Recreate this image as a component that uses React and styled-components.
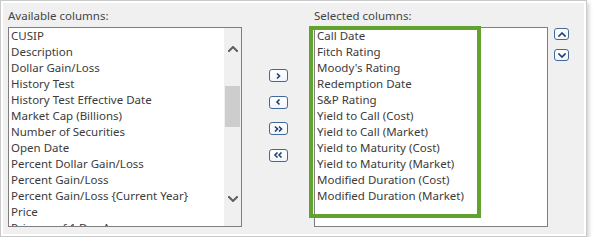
import React from "react";
import styled, { createGlobalStyle } from "styled-components";

const Global = createGlobalStyle`
  html, body { margin: 0; padding: 0; background: #ffffff; }
  body { font-family: "Noto Sans", "Open Sans", sans-serif; }
  * { box-sizing: border-box; }
`;

const Frame = styled.div`
  width: 587px;
  height: 237px;
  border: 1px solid #c9c9c9;
  background: #ffffff;
  padding: 2px;
  box-shadow: 2px 3px 4px rgba(0, 0, 0, 0.18);
`;

const Panel = styled.div`
  height: 100%;
  background: #f0f0f0;
  display: flex;
  align-items: flex-start;
  padding: 5px 0 0 5px;
`;

const Column = styled.div`
  display: flex;
  flex-direction: column;
  width: 234px;
`;

const Label = styled.div`
  font-size: 11.5px;
  line-height: 16px;
  color: #444444;
  height: 16px;
  margin-bottom: 3px;
  padding-left: ${(p) => p.$indent || 0}px;
`;

const ListBox = styled.div`
  position: relative;
  width: 234px;
  height: 200px;
  border: 1px solid #7f7f7f;
  background: #ffffff;
  display: flex;
  overflow: hidden;
`;

const Items = styled.ul`
  list-style: none;
  margin: 0;
  padding: 0 0 0 ${(p) => p.$pad}px;
  flex: 1;
  overflow: hidden;
`;

const Item = styled.li`
  font-size: 11.5px;
  line-height: 16px;
  height: 16px;
  color: #3b3b3b;
  white-space: nowrap;
`;

const Scrollbar = styled.div`
  width: 17px;
  background: #f0f0f0;
  display: flex;
  flex-direction: column;
  align-items: center;
`;

const ArrowSlot = styled.div`
  height: ${(p) => p.$h}px;
  display: flex;
  align-items: ${(p) => (p.$end ? "flex-end" : "flex-start")};
  justify-content: center;
  padding: ${(p) => p.$pad};
`;

const Thumb = styled.div`
  width: 15px;
  height: 41px;
  background: #cdcdcd;
`;

const Track = styled.div`
  flex: 1;
`;

const Middle = styled.div`
  width: 72px;
  display: flex;
  flex-direction: column;
  align-items: center;
  gap: 13.5px;
  padding-top: 61px;
`;

const NavButton = styled.button`
  width: ${(p) => p.$w}px;
  height: ${(p) => p.$h}px;
  padding: 0;
  margin: 0;
  border: 1px solid #41699a;
  border-radius: 3px;
  background: linear-gradient(#ffffff, #f3f6fa);
  display: flex;
  align-items: center;
  justify-content: center;
  cursor: pointer;
`;

const Side = styled.div`
  display: flex;
  flex-direction: column;
  gap: 9px;
  padding: 20px 0 0 6px;
`;

const Highlight = styled.div`
  position: absolute;
  left: -5px;
  top: -1px;
  width: 172px;
  height: 192px;
  border: 4px solid #62a330;
  pointer-events: none;
`;

const SelectedWrap = styled.div`
  position: relative;
`;

const Chevron = ({ dir = "up", color = "#5e5e5e", w = 10, h = 6, sw = 2 }) => {
  const d = {
    up: `M1 ${h - 1} L${w / 2} 1 L${w - 1} ${h - 1}`,
    down: `M1 1 L${w / 2} ${h - 1} L${w - 1} 1`,
  }[dir];
  return (
    <svg width={w} height={h} viewBox={`0 0 ${w} ${h}`}>
      <path d={d} fill="none" stroke={color} strokeWidth={sw} strokeLinecap="square" />
    </svg>
  );
};

const Glyph = ({ kind }) => {
  const c = "#1e3f74";
  const single = (x, right) =>
    right ? `M${x} 1.5 L${x + 2.5} 4 L${x} 6.5` : `M${x + 2.5} 1.5 L${x} 4 L${x + 2.5} 6.5`;
  let d;
  if (kind === "r") d = single(4, true);
  if (kind === "l") d = single(4, false);
  if (kind === "rr") d = single(2, true) + " " + single(6, true);
  if (kind === "ll") d = single(2, false) + " " + single(6, false);
  return (
    <svg width="11" height="8" viewBox="0 0 11 8">
      <path d={d} fill="none" stroke={c} strokeWidth="1.6" />
    </svg>
  );
};

const available = [
  "CUSIP",
  "Description",
  "Dollar Gain/Loss",
  "History Test",
  "History Test Effective Date",
  "Market Cap (Billions)",
  "Number of Securities",
  "Open Date",
  "Percent Dollar Gain/Loss",
  "Percent Gain/Loss",
  "Percent Gain/Loss {Current Year}",
  "Price",
  "Price as of 1 Day Ago",
];

const selected = [
  "Call Date",
  "Fitch Rating",
  "Moody's Rating",
  "Redemption Date",
  "S&P Rating",
  "Yield to Call (Cost)",
  "Yield to Call (Market)",
  "Yield to Maturity (Cost)",
  "Yield to Maturity (Market)",
  "Modified Duration (Cost)",
  "Modified Duration (Market)",
];

export default function App() {
  return (
    <>
      <Global />
      <Frame>
        <Panel>
          <Column>
            <Label>Available columns:</Label>
            <ListBox>
              <Items $pad={2}>
                {available.map((t) => (
                  <Item key={t}>{t}</Item>
                ))}
              </Items>
              <Scrollbar>
                <ArrowSlot $h={58} $pad="18px 0 0 0">
                  <Chevron dir="up" />
                </ArrowSlot>
                <Thumb />
                <Track />
                <ArrowSlot $h={30} $pad="0 0 0 0">
                  <Chevron dir="down" />
                </ArrowSlot>
              </Scrollbar>
            </ListBox>
          </Column>
          <Middle>
            <NavButton $w={19} $h={13} aria-label="Add"><Glyph kind="r" /></NavButton>
            <NavButton $w={19} $h={13} aria-label="Remove"><Glyph kind="l" /></NavButton>
            <NavButton $w={19} $h={13} aria-label="Add all"><Glyph kind="rr" /></NavButton>
            <NavButton $w={19} $h={13} aria-label="Remove all"><Glyph kind="ll" /></NavButton>
          </Middle>
          <Column>
            <Label $indent={-1}>Selected columns:</Label>
            <SelectedWrap>
              <ListBox>
                <Items $pad={2}>
                  {selected.map((t) => (
                    <Item key={t}>{t}</Item>
                  ))}
                </Items>
              </ListBox>
              <Highlight />
            </SelectedWrap>
          </Column>
          <Side>
            <NavButton $w={15} $h={12} aria-label="Move up">
              <Chevron dir="up" color="#1e3f74" w={8} h={5} sw={1.6} />
            </NavButton>
            <NavButton $w={15} $h={12} aria-label="Move down">
              <Chevron dir="down" color="#1e3f74" w={8} h={5} sw={1.6} />
            </NavButton>
          </Side>
        </Panel>
      </Frame>
    </>
  );
}
